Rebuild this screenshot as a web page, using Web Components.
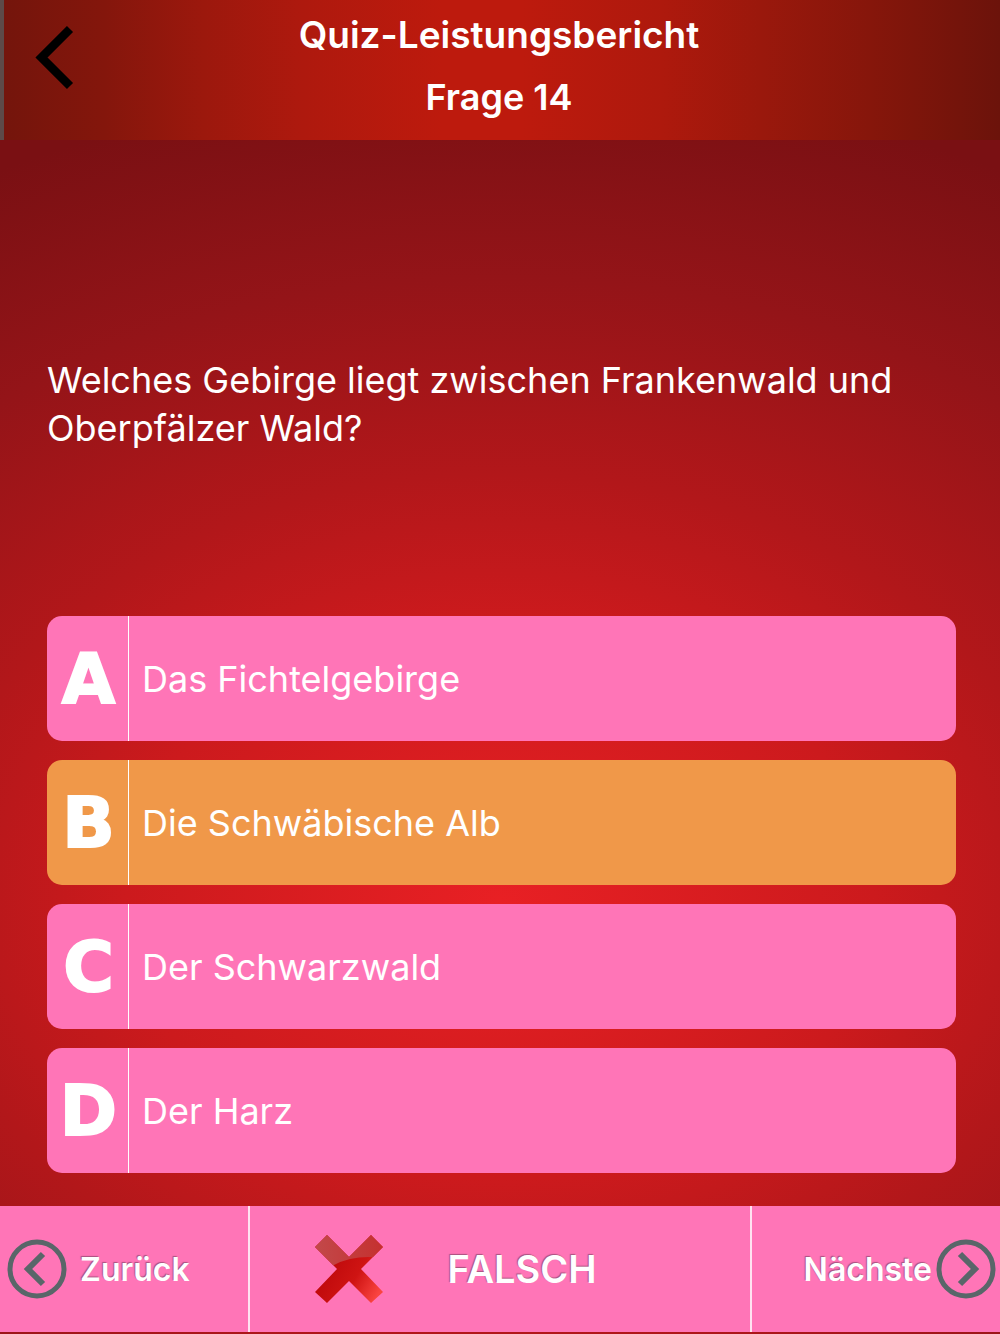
<!DOCTYPE html>
<html lang="de">
<head>
<meta charset="utf-8">
<meta name="viewport" content="width=device-width, initial-scale=1">
<title>Quiz-Leistungsbericht</title>
<style>
  html, body {
    margin: 0;
    min-height: 100%;
  }
  body {
    font-family: Inter, "Liberation Sans", sans-serif;
    color: white;
  }
</style>
</head>
<body>
<quiz-report>
  <quiz-header slot="header">
    Quiz-Leistungsbericht
    <span slot="subtitle">Frage 14</span>
  </quiz-header>
  <quiz-question>Welches Gebirge liegt zwischen Frankenwald und Oberpfälzer Wald?</quiz-question>
  <quiz-answers>
    <quiz-answer letter="A">Das Fichtelgebirge</quiz-answer>
    <quiz-answer letter="B" selected>Die Schwäbische Alb</quiz-answer>
    <quiz-answer letter="C">Der Schwarzwald</quiz-answer>
    <quiz-answer letter="D">Der Harz</quiz-answer>
  </quiz-answers>
  <quiz-footer slot="footer">
    <span slot="previous">Zurück</span>
    <span slot="result">FALSCH</span>
    <span slot="next">Nächste</span>
  </quiz-footer>
</quiz-report>

<script>
(function () {
  function define (name, html, setup) {
    let template = document.createElement('template')
    template.innerHTML = html

    window.customElements.define(name, class extends HTMLElement {
      constructor () {
        super()
        this.attachShadow({ mode: 'open' })
          .appendChild(template.content.cloneNode(true))
      }

      connectedCallback () {
        if (setup) setup(this, this.shadowRoot)
      }
    })
  }

  define('quiz-report', `
    <style>
      :host {
        --pink: #ff75b7;
        --orange: #f09849;
        display: flex;
        flex-direction: column;
        min-height: 100vh;
        background: radial-gradient(110% 820px at 50% 900px,
          #e82024 0%, #cc1a1d 34%, #b2171a 52%, #941418 76%, #7a1013 100%);
      }
      main {
        flex: 1;
        display: flex;
        flex-direction: column;
        padding: 0 44px 33px 47px;
      }
    </style>
    <slot name="header"></slot>
    <main><slot></slot></main>
    <slot name="footer"></slot>
  `)

  define('quiz-header', `
    <style>
      :host {
        display: block;
      }
      header {
        display: grid;
        grid-template-columns: 108px 1fr 108px;
        min-height: 140px;
        box-sizing: border-box;
        border-left: 4px solid #5d4a48;
        background: linear-gradient(to right,
          #74150c 0%, #84160c 10%, #9c180d 20%, #ae190e 30%, #bd1a0d 44%,
          #bd1a0d 52%, #ae190d 66%, #9a180c 76%, #86160b 87%, #6c130b 100%);
      }
      button {
        align-self: start;
        justify-self: start;
        margin: 24px 0 0 28px;
        padding: 0;
        border: 0;
        background: none;
        line-height: 0;
      }
      .titles {
        text-align: center;
        font-weight: 600;
        padding: 4px 6px 0 0;
      }
      h1, p {
        margin: 0;
        font: inherit;
        font-size: 37px;
        line-height: 62px;
      }
      p {
        font-size: 36px;
      }
    </style>
    <header>
      <button aria-label="Zurück zur Übersicht">
        <svg width="44" height="68" viewBox="0 0 44 68" fill="none" stroke="#000" stroke-width="8.6">
          <path d="M38 5L9.500 33.500L38 62"/>
        </svg>
      </button>
      <div class="titles">
        <h1><slot></slot></h1>
        <p><slot name="subtitle"></slot></p>
      </div>
    </header>
  `)

  define('quiz-question', `
    <style>
      :host {
        flex: 1;
        display: flex;
        align-items: center;
        padding: 52px 0 0;
      }
      p {
        margin: 0;
        font-size: 36px;
        line-height: 48px;
      }
    </style>
    <p><slot></slot></p>
  `)

  define('quiz-answers', `
    <style>
      :host {
        display: grid;
        gap: 19px;
      }
    </style>
    <slot></slot>
  `)

  define('quiz-answer', `
    <style>
      :host {
        display: block;
      }
      button {
        display: flex;
        align-items: stretch;
        width: 100%;
        min-height: 125px;
        padding: 0;
        border: 0;
        border-radius: 15px;
        background: var(--pink);
        color: inherit;
        font: inherit;
        font-size: 36px;
        text-align: left;
      }
      :host([selected]) button {
        background: var(--orange);
      }
      .letter, .text {
        display: flex;
        align-items: center;
      }
      .letter {
        justify-content: center;
        width: 82px;
        padding-left: 2px;
        box-sizing: border-box;
        border-right: 1px solid white;
        font: bold 69px "DejaVu Sans", sans-serif;
        -webkit-text-stroke: 2px white;
      }
      .text {
        padding-left: 13px;
      }
    </style>
    <button>
      <span class="letter"></span>
      <span class="text"><slot></slot></span>
    </button>
  `, function (host, root) {
    root.querySelector('.letter').textContent = host.getAttribute('letter')
    root.querySelector('button').setAttribute('aria-pressed', host.hasAttribute('selected'))
  })

  define('quiz-footer', `
    <style>
      :host {
        display: block;
        padding-bottom: 2px;
      }
      footer {
        display: grid;
        grid-template-columns: 25fr 51fr 25fr;
        min-height: 126px;
        font-weight: 600;
        text-shadow: -1px -1px 1px rgba(110, 60, 90, .6);
      }
      button, .result {
        display: flex;
        align-items: center;
        border: 0;
        background: var(--pink);
      }
      button {
        gap: 13px;
        padding: 0 7px;
        color: inherit;
        font: inherit;
        font-size: 32px;
        text-shadow: inherit;
      }
      .next {
        justify-content: flex-end;
        gap: 4px;
        padding: 0 4px;
      }
      .result {
        gap: 64px;
        padding-left: 64px;
        border: solid #ffe3f1;
        border-width: 0 2px;
        font-size: 38px;
      }
      svg {
        flex: none;
      }
    </style>
    <footer>
      <button class="previous">
        <svg width="60" height="60" viewBox="0 0 60 60" fill="none" stroke="#596669">
          <circle cx="30" cy="30" r="27" stroke-width="5"/>
          <path d="M36 15L21 30L36 45" stroke-width="6"/>
        </svg>
        <slot name="previous"></slot>
      </button>
      <div class="result">
        <svg width="70" height="70" viewBox="0 0 70 70">
          <defs>
            <linearGradient id="base" gradientUnits="userSpaceOnUse" x1="14" y1="36" x2="62" y2="64">
              <stop offset="0" stop-color="#c00a0c"/>
              <stop offset=".5" stop-color="#cf1413"/>
              <stop offset="1" stop-color="#fa4440"/>
            </linearGradient>
            <linearGradient id="gloss" x1="0" y1="0" x2="1" y2="0">
              <stop offset="0" stop-color="#c2494a"/>
              <stop offset="1" stop-color="#c5302f"/>
            </linearGradient>
            <clipPath id="cross">
              <path d="M13 1L35 23L57 1L69 13L47 35L69 58L57 69L35 47L13 69L1 58L23 35L1 13Z"/>
            </clipPath>
          </defs>
          <g clip-path="url(#cross)">
            <path fill="url(#base)" d="M0 0H70V70H0Z"/>
            <path fill="url(#gloss)" d="M0 0H70V24Q40 20 20 31L0 42Z"/>
          </g>
        </svg>
        <slot name="result"></slot>
      </div>
      <button class="next">
        <slot name="next"></slot>
        <svg width="60" height="60" viewBox="0 0 60 60" fill="none" stroke="#596669">
          <circle cx="30" cy="30" r="27" stroke-width="5"/>
          <path d="M24 15L39 30L24 45" stroke-width="6"/>
        </svg>
      </button>
    </footer>
  `)
})()
</script>
</body>
</html>
